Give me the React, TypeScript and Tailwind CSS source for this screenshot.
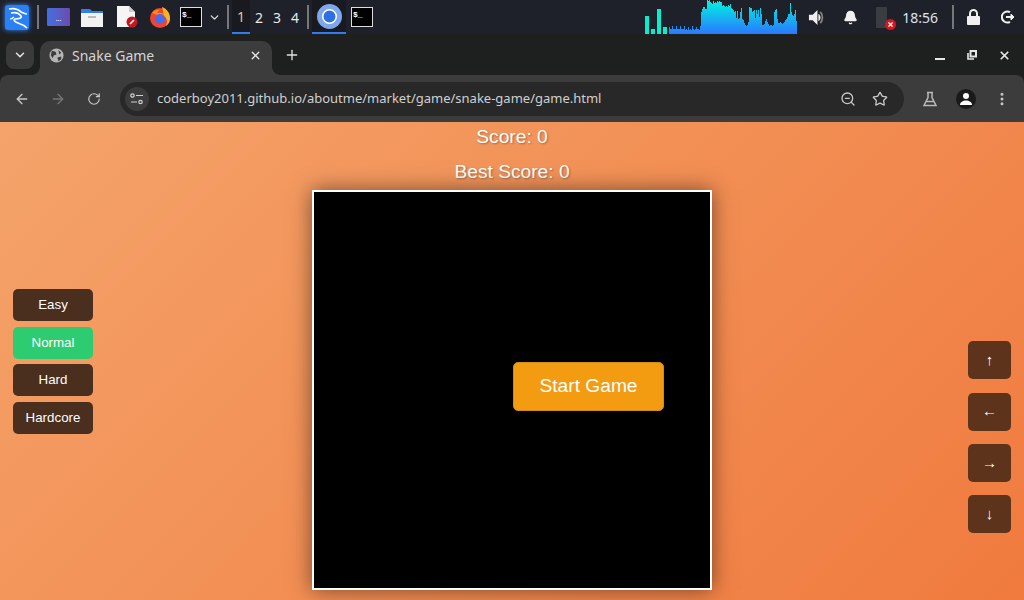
import { ArrowLeft, ArrowRight, ChevronDown, MoreVertical, Plus, RotateCw, Star, X, ZoomOut, Bell } from "lucide-react";

const SPECTRUM = [
  7, 5, 5, 8, 5, 5, 5, 8, 5, 5, 5, 8, 5, 5, 5, 8, 4, 5, 4, 7, 4, 5, 4, 8, 5, 4, 5, 7, 5, 5, 4, 8,
  22, 25, 27, 27, 25, 25, 34, 33, 34, 32, 31, 30, 33, 31, 32, 31, 33, 32, 33, 32, 32, 28, 29, 28, 27, 28, 27, 29, 28, 30, 26, 25,
  24, 22, 23, 16, 23, 15, 16, 22, 26, 15, 14, 11, 9, 8, 9, 12, 27, 26, 26, 22, 23, 24, 16, 24, 20, 24, 17, 26, 20, 9, 9, 10,
  13, 15, 12, 10, 8, 9, 9, 8, 9, 22, 24, 25, 15, 11, 11, 12, 11, 10, 11, 12, 14, 15, 17, 20, 20, 31, 22, 19, 18, 20, 24, 13,
];

function KaliLogo() {
  return (
    <div className="flex h-[25px] w-[24px] items-center justify-center rounded-[3px] bg-[#2a80f6] shadow-[0_0_5px_#2f86f5]">
      <svg viewBox="0 0 24 24" className="h-[24px] w-[24px]" fill="none" stroke="white" strokeWidth="1.7">
        <path d="M4 4c5-1 9 0 12 3 2 1 3 2 6 2M6 8c4-1 8 0 10 3 1 2-2 3-6 3-2 1 0 3 3 4 3 1 6 2 9 5" />
        <path d="M9 12c-1 1-3 2-4 2" strokeWidth="1.2" />
      </svg>
    </div>
  );
}

function Spectrum() {
  return (
    <svg width="152" height="34" viewBox="0 0 152 34" className="shrink-0">
      <defs>
        <linearGradient id="spec" gradientUnits="userSpaceOnUse" x1="0" y1="0" x2="0" y2="34">
          <stop offset="0" stopColor="#00f5e0" />
          <stop offset="1" stopColor="#2b78ff" />
        </linearGradient>
      </defs>
      <rect x="0" y="16" width="4" height="18" fill="#00f0d0" />
      <rect x="6" y="29" width="4" height="5" fill="#00f0d0" />
      <rect x="12" y="9" width="4" height="25" fill="#00f0d0" />
      <rect x="18" y="27" width="4" height="7" fill="#00f0d0" />
      {SPECTRUM.map((h, i) => (
        <rect key={i} x={24 + i} y={34 - h} width="1" height={h} fill="url(#spec)" />
      ))}
    </svg>
  );
}

function Taskbar() {
  return (
    <div className="flex h-[34px] items-center bg-[#1f212a] font-['Noto_Sans',sans-serif] text-[#e8e8e8]">
      <div className="ml-[5px] mr-[8px]"><KaliLogo /></div>
      <div className="h-[24px] w-[2px] bg-[#777]" />
      <div className="ml-[8px] h-[18px] w-[23px] rounded-[1px] bg-gradient-to-r from-[#3f6fe0] to-[#6a4bb0] text-center text-[7px] leading-[22px] text-white">...</div>
      <svg viewBox="0 0 22 20" className="ml-[11px] h-[20px] w-[22px]">
        <path d="M0 2h9l2 2h11v4H0z" fill="#2f7fe6" />
        <path d="M0 6h22v14H0z" fill="#f2f2f2" />
        <rect x="7" y="9" width="8" height="2" fill="#bbb" />
      </svg>
      <svg viewBox="0 0 22 22" className="ml-[13px] h-[22px] w-[22px]">
        <path d="M1 0h12l6 6v15H1z" fill="#f5f5f5" />
        <path d="M13 0l6 6h-6z" fill="#ccc" />
        <circle cx="16" cy="16" r="5.5" fill="#c8161d" />
        <path d="M14 18l4-4" stroke="white" strokeWidth="1.6" />
      </svg>
      <svg viewBox="0 0 22 22" className="ml-[11px] h-[22px] w-[22px]">
        <circle cx="11" cy="12" r="10" fill="#f0442f" />
        <path d="M13 1c5 2 8 6 8 11 0 3-1 6-4 8 2-4 1-8-2-10-1-3-1-6-2-9z" fill="#fbb325" />
        <path d="M3 7c2-3 6-4 8-3-2 1-3 2-3 3 3-1 7 0 8 3-2-1-4 0-5 0z" fill="#ff8a1f" />
        <circle cx="11" cy="13" r="5" fill="#4b6be8" />
      </svg>
      <div className="ml-[9px] flex h-[20px] w-[22px] items-start border border-[#ddd] bg-black pl-[1px] font-['Liberation_Mono',monospace] text-[8px] font-bold leading-[13px] text-white">$_</div>
      <ChevronDown size={13} strokeWidth={2.5} className="ml-[6px] text-[#ddd]" />
      <div className="ml-[6px] h-[24px] w-[2px] bg-[#777]" />
      <div className="ml-[3px] flex h-[34px] text-[14px]">
        <div className="flex h-[34px] w-[18px] items-center justify-center border-b-2 border-[#2f7cf0] bg-[#181a20] text-[#f0c090]">1</div>
        <div className="flex w-[18px] items-center justify-center">2</div>
        <div className="flex w-[18px] items-center justify-center">3</div>
        <div className="flex w-[18px] items-center justify-center">4</div>
      </div>
      <div className="ml-[3px] h-[24px] w-[2px] bg-[#777]" />
      <div className="ml-[3px] flex h-[34px] w-[34px] items-center justify-center border-b-2 border-[#2f7cf0] bg-[#181a20]">
        <svg viewBox="0 0 24 24" className="h-[25px] w-[25px]">
          <circle cx="12" cy="12" r="12" fill="#7ea6ea" />
          <circle cx="12" cy="12" r="6.5" fill="#2f70e0" stroke="white" strokeWidth="1.5" />
        </svg>
      </div>
      <div className="ml-[5px] h-[20px] w-[22px] border border-[#ddd] bg-black pl-[1px] font-['Liberation_Mono',monospace] text-[8px] font-bold leading-[13px] text-white">$_</div>
      <div className="ml-auto flex items-center">
        <Spectrum />
        <svg viewBox="0 0 18 18" className="ml-[11px] h-[17px] w-[17px]">
          <path d="M1 6h4l5-5v16l-5-5H1z" fill="#f0f0f0" />
          <path d="M13 3c3 3 3 9 0 12" stroke="#888" strokeWidth="1.8" fill="none" />
          <path d="M11 5c3 2 3 6 0 8z" fill="#f0f0f0" />
        </svg>
        <Bell size={15} fill="#f0f0f0" className="ml-[18px] text-[#f0f0f0]" />
        <div className="relative ml-[18px] h-[21px] w-[11px] rounded-[1px] bg-[#3a3c42]">
          <div className="absolute -right-[9px] bottom-[-2px] flex h-[11px] w-[11px] items-center justify-center rounded-full bg-[#d8141c]">
            <X size={7} strokeWidth={4} className="text-white" />
          </div>
        </div>
        <span className="ml-[15px] text-[14px] text-[#dde3ea]">18:56</span>
        <div className="ml-[14px] h-[24px] w-[2px] bg-[#777]" />
        <svg viewBox="0 0 13 16" className="ml-[13px] h-[16px] w-[13px]">
          <rect x="0" y="7" width="13" height="9" rx="1" fill="#f0f0f0" />
          <path d="M3 7V4.500a3.500 3.500 0 0 1 7 0V7" fill="none" stroke="#f0f0f0" strokeWidth="2" />
        </svg>
        <svg viewBox="0 0 14 14" className="ml-[21px] mr-[9px] h-[14px] w-[14px]" fill="none" stroke="#f0f0f0" strokeWidth="2">
          <path d="M9 2.200A5.500 5.500 0 1 0 9 11.800" />
          <path d="M5 7h7" />
          <path d="M10 4l3 3-3 3z" fill="#f0f0f0" strokeWidth="1" />
        </svg>
      </div>
    </div>
  );
}

function BrowserChrome() {
  return (
    <div className="bg-[#1e1f1f] font-['Noto_Sans',sans-serif]">
      {/* tab strip */}
      <div className="flex h-[41px] pl-[6px] pt-[7px]">
        <div className="flex h-[28px] w-[28px] items-center justify-center rounded-[8px] bg-[#3a3a3a]">
          <ChevronDown size={14} strokeWidth={2.5} className="text-[#e6e6e6]" />
        </div>
        <div className="relative ml-[6px] flex h-[34px] w-[232px] items-center rounded-t-[10px] bg-[#3c3c3c] pb-[6px] pl-[9px]">
          <div className="absolute -left-[8px] bottom-0 h-[8px] w-[8px] bg-[radial-gradient(circle_at_0_0,#1e1f1f_7.5px,#3c3c3c_8px)]" />
          <div className="absolute -right-[8px] bottom-0 h-[8px] w-[8px] bg-[radial-gradient(circle_at_100%_0,#1e1f1f_7.5px,#3c3c3c_8px)]" />
          <svg viewBox="0 0 16 16" className="h-[15px] w-[15px]">
            <circle cx="8" cy="8" r="7.500" fill="#b5b5b5" />
            <path d="M3 3l4 1 1 3-3 1-1 3-2-3zM10 2l3 3-2 2zM9 10l4-1 0 3-3 2z" fill="#3c3c3c" />
          </svg>
          <span className="ml-[8px] text-[14px] text-[#d5d5d5]">Snake Game</span>
          <X size={13} strokeWidth={2.5} className="ml-auto mr-[10px] text-[#e6e6e6]" />
        </div>
        <Plus size={16} strokeWidth={2} className="ml-[12px] mt-[6px] text-[#e0e0e0]" />
        <div className="ml-auto mr-[13px] flex items-start pt-[9px] text-[#e6e6e6]">
          <svg viewBox="0 0 11 10" className="h-[10px] w-[11px]"><rect x="0" y="8" width="10" height="2" fill="currentColor" /></svg>
          <svg viewBox="0 0 10 10" className="ml-[21px] h-[10px] w-[10px]" fill="none" stroke="currentColor" strokeWidth="1.6">
            <rect x="3.500" y="1" width="5.500" height="5.500" strokeWidth="2" />
            <path d="M1 3v6h6" />
          </svg>
          <X size={13} strokeWidth={3.2} className="ml-[21px] -mt-[1px]" />
        </div>
      </div>
      {/* toolbar */}
      <div className="flex h-[47px] items-center rounded-t-[8px] bg-[#3c3c3c] pl-[14px] pr-[13px]">
        <ArrowLeft size={16} strokeWidth={2} className="text-[#c8c8c8]" />
        <ArrowRight size={16} strokeWidth={2} className="ml-[20px] text-[#757575]" />
        <RotateCw size={14} strokeWidth={2} className="ml-[21px] text-[#c8c8c8]" />
        <div className="ml-[19px] flex h-[34px] w-[784px] items-center rounded-full bg-[#282828] pl-[5px] pr-[16px]">
          <div className="flex h-[24px] w-[24px] items-center justify-center rounded-full bg-[#3c3c3c]">
            <svg viewBox="0 0 14 12" className="h-[12px] w-[14px]" fill="none" stroke="#d0d0d0" strokeWidth="1.2">
              <circle cx="2.500" cy="2.500" r="1.700" />
              <path d="M6 2.500h7M1 9h6" />
              <circle cx="10.500" cy="9" r="1.700" />
            </svg>
          </div>
          <span className="ml-[8px] text-[13px] text-[#d0d0d0]">coderboy2011.github.io/aboutme/market/game/snake-game/game.html</span>
          <ZoomOut size={16} className="ml-auto text-[#c8c8c8]" />
          <Star size={16} className="ml-[16px] text-[#c8c8c8]" />
        </div>
        <svg viewBox="0 0 16 16" className="ml-[18px] h-[16px] w-[16px]" fill="none" stroke="#b8b8b8" strokeWidth="1.5">
          <path d="M5 1.500h6M6 1.500v5L2 14.500h12L10 6.500v-5M4.500 10.500h7" />
        </svg>
        <div className="ml-[18px] flex h-[20px] w-[20px] items-center justify-center rounded-full bg-[#1a1a1a]">
          <svg viewBox="0 0 14 14" className="h-[14px] w-[14px]" fill="white">
            <circle cx="7" cy="4" r="3" />
            <path d="M1 13c0-3 3-4.500 6-4.500s6 1.500 6 4.500z" />
          </svg>
        </div>
        <MoreVertical size={16} strokeWidth={2.5} className="ml-[18px] text-[#c8c8c8]" />
      </div>
    </div>
  );
}

function Page() {
  const levels = ["Easy", "Normal", "Hard", "Hardcore"];
  const moves = ["↑", "←", "→", "↓"];

  return (
    <div className="flex h-[478px] overflow-hidden bg-[linear-gradient(135deg,#f4a36a,#f07a3e)] font-['Liberation_Sans',sans-serif] text-white">
      <div className="ml-[13px] mt-[167px] flex w-[80px] flex-col gap-[5.5px]">
        {levels.map((l) => (
          <button
            key={l}
            className={`h-[32px] rounded-[5px] text-[13.33px] ${l === "Normal" ? "bg-[#2ecc71]" : "bg-[#4a2e1e]"}`}
          >
            {l}
          </button>
        ))}
      </div>
      <div className="ml-[219px] flex w-[400px] flex-col items-center">
        <div className="mt-[4px] text-[19.2px] leading-[22px] [text-shadow:1px_1px_2px_rgba(0,0,0,0.3)]">Score: 0</div>
        <div className="mt-[13px] text-[19.2px] leading-[22px] [text-shadow:1px_1px_2px_rgba(0,0,0,0.3)]">Best Score: 0</div>
        <div className="relative mt-[7px] h-[400px] w-[400px] shrink-0 border-2 border-white bg-black shadow-[0_0_20px_rgba(0,0,0,0.5)]">
          <button className="absolute left-[199px] top-[170px] h-[49px] w-[151px] rounded-[5px] border border-[#d08c18] bg-[#f39c12] text-[19.2px] text-white">
            Start Game
          </button>
        </div>
      </div>
      <div className="ml-[256px] mt-[219.4px] flex w-[43px] flex-col gap-[13.33px]">
        {moves.map((m) => (
          <button key={m} className="h-[38px] rounded-[5px] bg-[#5e331b] text-[15px] text-white">
            {m}
          </button>
        ))}
      </div>
    </div>
  );
}

export default function App() {
  return (
    <div className="h-[600px] w-[1024px] overflow-hidden">
      <Taskbar />
      <BrowserChrome />
      <Page />
    </div>
  );
}
